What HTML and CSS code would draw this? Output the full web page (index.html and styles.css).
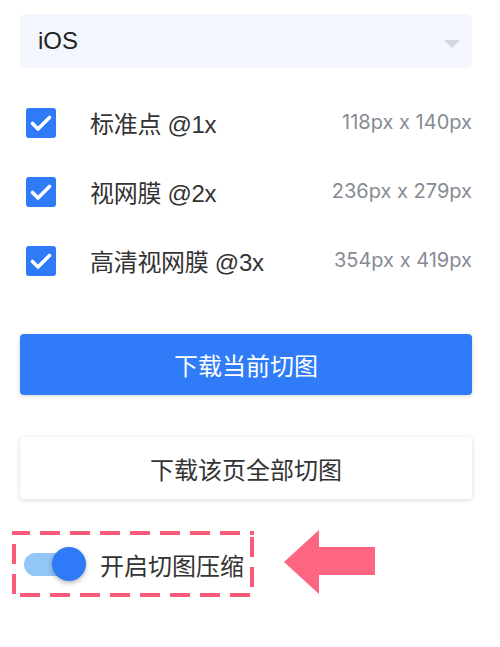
FILE: index.html
```html
<!DOCTYPE html>
<html lang="zh">
<head>
<meta charset="utf-8">
<link rel="stylesheet" href="styles.css">
</head>
<body>
<div class="panel">
  <div class="select">
    <span class="select-value">iOS</span>
    <span class="caret"></span>
  </div>
  <ul class="options">
    <li class="option">
      <span class="checkbox"><svg viewBox="0 0 30 30" width="30" height="30"><path d="M6.5 15.5 L12 21 L23.5 9.5" fill="none" stroke="#fff" stroke-width="3.6" stroke-linecap="round" stroke-linejoin="round"/></svg></span>
      <span class="option-label">标准点 @1x</span>
      <span class="option-size">118px x 140px</span>
    </li>
    <li class="option">
      <span class="checkbox"><svg viewBox="0 0 30 30" width="30" height="30"><path d="M6.5 15.5 L12 21 L23.5 9.5" fill="none" stroke="#fff" stroke-width="3.6" stroke-linecap="round" stroke-linejoin="round"/></svg></span>
      <span class="option-label">视网膜 @2x</span>
      <span class="option-size">236px x 279px</span>
    </li>
    <li class="option">
      <span class="checkbox"><svg viewBox="0 0 30 30" width="30" height="30"><path d="M6.5 15.5 L12 21 L23.5 9.5" fill="none" stroke="#fff" stroke-width="3.6" stroke-linecap="round" stroke-linejoin="round"/></svg></span>
      <span class="option-label">高清视网膜 @3x</span>
      <span class="option-size">354px x 419px</span>
    </li>
  </ul>
  <button class="btn btn-primary">下载当前切图</button>
  <button class="btn btn-default">下载该页全部切图</button>
  <div class="compress-row">
    <div class="compress-box">
      <span class="switch"><span class="switch-track"></span><span class="switch-knob"></span></span>
      <span class="compress-label">开启切图压缩</span>
    </div>
    <svg class="pointer-arrow" viewBox="0 0 92 64" width="92" height="64"><polygon points="0,32 35,0 35,17 91,17 91,45 35,45 35,64" fill="#fd6581"/></svg>
  </div>
</div>
</body>
</html>
```

FILE: styles.css
```css
* { box-sizing: border-box; }
html, body { margin: 0; padding: 0; background: #fff; }
body {
  width: 500px;
  height: 647px;
  overflow: hidden;
  font-family: "Liberation Sans", "Noto Sans CJK SC", sans-serif;
  color: #333;
}
.panel {
  padding: 14px 28px 0 20px;
}
.select {
  height: 54px;
  background: #f3f6fd;
  border-radius: 5px;
  display: flex;
  align-items: center;
  padding: 0 12px 0 18px;
}
.select-value {
  font-size: 24px;
  color: #222;
}
.caret {
  margin-left: auto;
  width: 0;
  height: 0;
  border-left: 8px solid transparent;
  border-right: 8px solid transparent;
  border-top: 8px solid #d4d7dd;
  margin-top: 6px;
}
.options {
  list-style: none;
  margin: 20px 0 0;
  padding: 0;
}
.option {
  height: 69px;
  display: flex;
  align-items: center;
  padding-left: 6px;
}
.checkbox {
  width: 30px;
  height: 30px;
  border-radius: 3px;
  background: #2f7bf7;
  display: block;
  flex: none;
}
.checkbox svg { display: block; }
.option-label {
  margin-left: 34px;
  font-size: 24px;
  color: #333;
  letter-spacing: -0.3px;
}
.option-size {
  margin-left: auto;
  font-family: Inter, "Liberation Sans", sans-serif;
  font-size: 20px;
  color: #868b94;
  margin-top: -2px;
}
.btn {
  display: block;
  width: 100%;
  border: none;
  border-radius: 4px;
  font-family: "Liberation Sans", "Noto Sans CJK SC", sans-serif;
  font-size: 24px;
  padding: 0;
  cursor: pointer;
}
.btn-primary {
  margin-top: 39px;
  height: 61px;
  background: #2f7bf8;
  color: #fff;
  box-shadow: 0 1px 4px rgba(0, 0, 0, 0.18);
}
.btn-default {
  margin-top: 42px;
  height: 62px;
  background: #fff;
  color: #333;
  box-shadow: 0 1px 5px rgba(0, 0, 0, 0.16);
}
.compress-row {
  margin-top: 31px;
  margin-left: -8px;
  display: flex;
  align-items: center;
}
.compress-box {
  width: 242px;
  height: 66px;
  display: flex;
  align-items: center;
  padding-left: 12px;
  background:
    linear-gradient(90deg, #f95b78 20px, transparent 20px) -2px 0 / 30px 4px repeat-x,
    linear-gradient(90deg, #f95b78 20px, transparent 20px) 8px 100% / 30px 4px repeat-x,
    linear-gradient(180deg, #f95b78 20px, transparent 20px) 0 13px / 4px 30px repeat-y,
    linear-gradient(180deg, #f95b78 20px, transparent 20px) 100% 6px / 4px 30px repeat-y;
}
.switch {
  display: flex;
  align-items: center;
}
.switch-track {
  width: 44px;
  height: 23px;
  border-radius: 12px;
  background: #92c6f6;
}
.switch-knob {
  width: 34px;
  height: 34px;
  border-radius: 50%;
  background: #2f7bf7;
  margin-left: -16px;
  box-shadow: 0 2px 5px rgba(0, 0, 0, 0.28);
}
.compress-label {
  margin-left: 14px;
  font-size: 24px;
  color: #333;
}
.pointer-arrow {
  display: block;
  margin-left: 30px;
  margin-bottom: 4px;
}
```
